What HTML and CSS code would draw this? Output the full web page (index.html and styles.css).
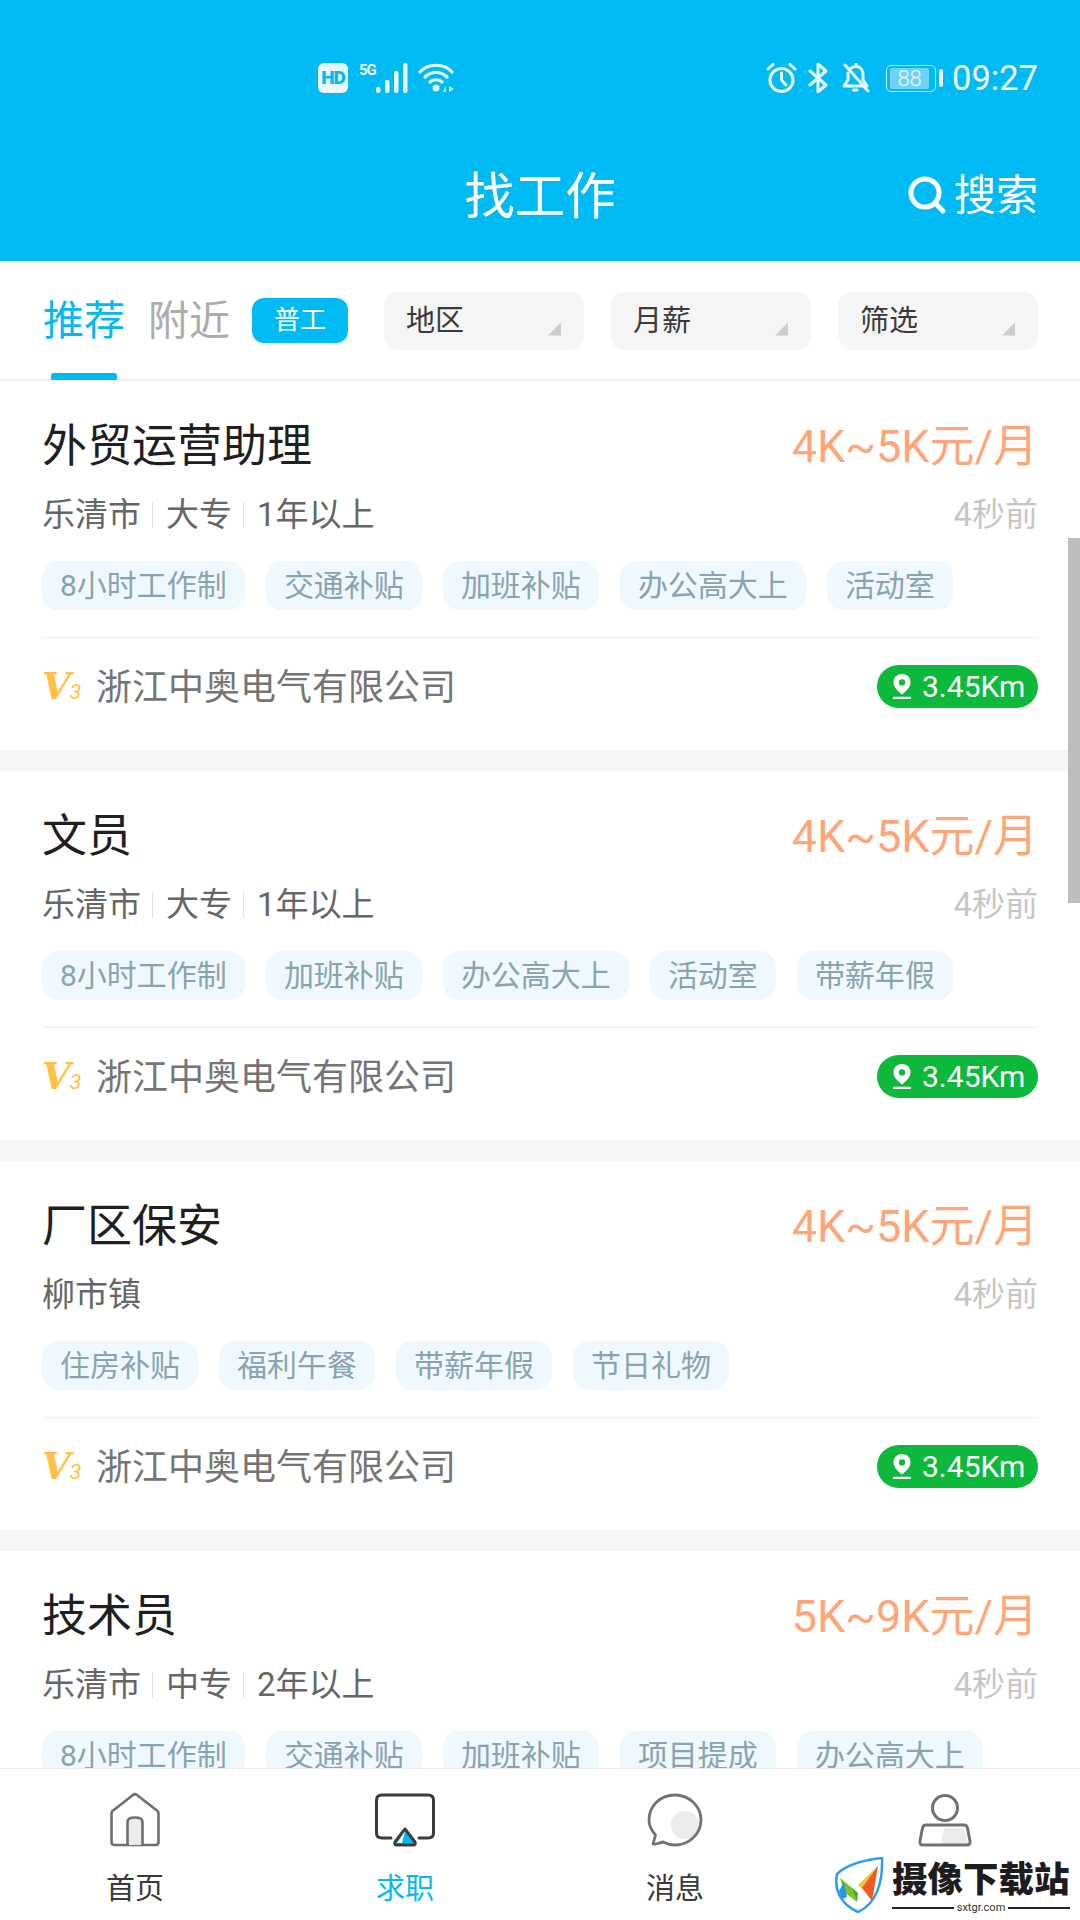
FILE: index.html
```html
<!DOCTYPE html>
<html lang="zh-CN">
<head>
  <meta charset="UTF-8" />
  <meta name="viewport" content="width=device-width, initial-scale=1.0"/>
  <title>找工作</title>
  <link rel="stylesheet" href="styles.css">
</head>
<body>
  <svg class="defs" width="0" height="0">
    <symbol id="pin" viewBox="0 0 24 30">
      <path d="M12 1C6 1 2.500 5.500 2.500 10.500C2.500 16 8 20.500 12 24C16 20.500 21.500 16 21.500 10.500C21.500 5.500 18 1 12 1Z" fill="#fff"/>
      <circle cx="12" cy="10.500" r="3.500" fill="#0db93a"/>
      <rect x="2" y="26.500" width="20" height="2.500" rx="1" fill="#fff"/>
    </symbol>
  </svg>

  <div class="page">
    <header class="header">
      <div class="status">
        <div class="status-group">
          <span class="hd">HD</span>
          <span class="net">5G</span>
          <svg class="ic-bars" width="32" height="30" viewBox="0 0 32 30">
            <g fill="#e8f8fe">
              <rect x="0" y="24" width="4.500" height="6" rx="2"/>
              <rect x="9" y="17" width="4.500" height="13" rx="2"/>
              <rect x="18" y="8" width="4.500" height="22" rx="2"/>
              <rect x="27" y="0" width="4.500" height="30" rx="2"/>
            </g>
          </svg>
          <svg class="ic-wifi" width="38" height="30" viewBox="0 0 38 30">
            <g fill="none" stroke="#e8f8fe" stroke-width="3.200" stroke-linecap="round">
              <path d="M2 9C10 0 26 0 34 9"/>
              <path d="M7 14C13 8 23 8 29 14"/>
              <path d="M12 19C15 16 21 16 24 19"/>
            </g>
            <circle cx="18" cy="25" r="3.500" fill="#e8f8fe"/>
            <path d="M28 29V23L25 29ZM31 23V29L36 26Z" fill="#e8f8fe"/>
          </svg>
        </div>
        <div class="status-group status-right">
          <svg width="31" height="30" viewBox="0 0 31 30" fill="none" stroke="#e8f8fe" stroke-width="3" stroke-linecap="round">
            <circle cx="15.500" cy="17" r="11.500"/>
            <path d="M15.500 10V17L20 22"/>
            <path d="M2 6L7 1.500M29 6L24 1.500"/>
          </svg>
          <svg width="20" height="30" viewBox="0 0 20 30" fill="none" stroke="#e8f8fe" stroke-width="3" stroke-linejoin="round" stroke-linecap="round">
            <path d="M2 8L18 22L10 29V1L18 8L2 22"/>
          </svg>
          <svg width="28" height="30" viewBox="0 0 28 30" fill="none" stroke="#e8f8fe" stroke-width="3" stroke-linecap="round" stroke-linejoin="round">
            <path d="M8 6C10 4 12 3.500 14 3.500C19 3.500 21 8 21 12V17L25 23H7"/>
            <path d="M6 10V17L2 23H7"/>
            <path d="M3 2L26 28"/>
            <path d="M11.500 27H15" />
            <path d="M14 1V3"/>
          </svg>
          <div class="battery"><span class="battery-level">88</span></div>
          <span class="battery-tip"></span>
          <span class="clock">09:27</span>
        </div>
      </div>
      <div class="title-row">
        <span></span>
        <h1 class="title">找工作</h1>
        <div class="search">
          <svg width="38" height="38" viewBox="0 0 38 38" fill="none" stroke="#fff" stroke-width="5" stroke-linecap="round">
            <circle cx="17" cy="17" r="14"/>
            <path d="M27 27L35 35"/>
          </svg>
          <span class="search-text">搜索</span>
        </div>
      </div>
    </header>

    <nav class="tabs">
      <span class="tab tab-active">推荐</span>
      <span class="tab">附近</span>
      <span class="badge">普工</span>
      <div class="filters">
        <div class="filter">地区</div>
        <div class="filter">月薪</div>
        <div class="filter">筛选</div>
      </div>
    </nav>

    <main class="list">
      <article class="card">
        <div class="row">
          <h2 class="job">外贸运营助理</h2>
          <span class="pay">4K~5K元/月</span>
        </div>
        <div class="row row-meta">
          <div class="meta"><span>乐清市</span><span>大专</span><span>1年以上</span></div>
          <span class="time">4秒前</span>
        </div>
        <div class="tags">
          <span class="tag">8小时工作制</span>
          <span class="tag">交通补贴</span>
          <span class="tag">加班补贴</span>
          <span class="tag">办公高大上</span>
          <span class="tag">活动室</span>
        </div>
        <div class="company">
          <span class="level">V<small>3</small></span>
          <span class="company-name">浙江中奥电气有限公司</span>
          <span class="dist"><svg width="22" height="27"><use href="#pin"/></svg>3.45Km</span>
        </div>
      </article>

      <article class="card">
        <div class="row">
          <h2 class="job">文员</h2>
          <span class="pay">4K~5K元/月</span>
        </div>
        <div class="row row-meta">
          <div class="meta"><span>乐清市</span><span>大专</span><span>1年以上</span></div>
          <span class="time">4秒前</span>
        </div>
        <div class="tags">
          <span class="tag">8小时工作制</span>
          <span class="tag">加班补贴</span>
          <span class="tag">办公高大上</span>
          <span class="tag">活动室</span>
          <span class="tag">带薪年假</span>
        </div>
        <div class="company">
          <span class="level">V<small>3</small></span>
          <span class="company-name">浙江中奥电气有限公司</span>
          <span class="dist"><svg width="22" height="27"><use href="#pin"/></svg>3.45Km</span>
        </div>
      </article>

      <article class="card">
        <div class="row">
          <h2 class="job">厂区保安</h2>
          <span class="pay">4K~5K元/月</span>
        </div>
        <div class="row row-meta">
          <div class="meta"><span>柳市镇</span></div>
          <span class="time">4秒前</span>
        </div>
        <div class="tags">
          <span class="tag">住房补贴</span>
          <span class="tag">福利午餐</span>
          <span class="tag">带薪年假</span>
          <span class="tag">节日礼物</span>
        </div>
        <div class="company">
          <span class="level">V<small>3</small></span>
          <span class="company-name">浙江中奥电气有限公司</span>
          <span class="dist"><svg width="22" height="27"><use href="#pin"/></svg>3.45Km</span>
        </div>
      </article>

      <article class="card">
        <div class="row">
          <h2 class="job">技术员</h2>
          <span class="pay">5K~9K元/月</span>
        </div>
        <div class="row row-meta">
          <div class="meta"><span>乐清市</span><span>中专</span><span>2年以上</span></div>
          <span class="time">4秒前</span>
        </div>
        <div class="tags">
          <span class="tag">8小时工作制</span>
          <span class="tag">交通补贴</span>
          <span class="tag">加班补贴</span>
          <span class="tag">项目提成</span>
          <span class="tag">办公高大上</span>
        </div>
      </article>

      <div class="scrollbar"></div>
    </main>

    <footer class="bottom">
      <div class="bottom-item">
        <svg width="60" height="56" viewBox="0 0 60 56">
          <path d="M7.500 19L28 3C29.200 2 30.800 2 32 3L52.500 19C53.200 19.700 53.500 20.500 53.500 21.500V50C53.500 52 52.500 53 50.500 53H9.500C7.500 53 6.500 52 6.500 50V21.500C6.500 20.500 6.800 19.700 7.500 19Z" fill="none" stroke="#6f6f6f" stroke-width="2.600" stroke-linejoin="round"/>
          <path d="M24 53V30C24 27.500 26 26.500 30 26.500C34 26.500 37 27.500 37 30V53Z" fill="#ececec"/>
          <path d="M22.500 53V30C22.500 27 25 25.500 30 25.500C35 25.500 37.500 27 37.500 30V53" fill="none" stroke="#6f6f6f" stroke-width="2.600"/>
        </svg>
        <span>首页</span>
      </div>
      <div class="bottom-item bottom-item-active">
        <svg width="60" height="56" viewBox="0 0 60 56">
          <path d="M16 46H7C3.500 46 1.500 44 1.500 41V8C1.500 5 3.500 3 7 3H53C56.500 3 58.500 5 58.500 8V41C58.500 44 56.500 46 53 46H44" fill="none" stroke="#3c3c3c" stroke-width="3" stroke-linecap="round"/>
          <path d="M30 37L40 50C41 52 40 53 38 53H22C20 53 19 52 20 50Z" fill="#00baf4" stroke="#3c3c3c" stroke-width="3" stroke-linejoin="round"/>
          <path d="M30 39L22 51H27Z" fill="#fff"/>
        </svg>
        <span>求职</span>
      </div>
      <div class="bottom-item">
        <svg width="60" height="56" viewBox="0 0 60 56">
          <circle cx="40" cy="33" r="14" fill="#ebebeb"/>
          <path d="M8 52L10.500 43C6 38 4 33 4 28C4 14 15 3 30 3C44 3 56 14 56 28C56 42 44 53 30 53C25 53 21 51.500 18 50C14 50.500 11 53 8 52Z" fill="none" stroke="#727272" stroke-width="2.800" stroke-linejoin="round"/>
        </svg>
        <span>消息</span>
      </div>
      <div class="bottom-item">
        <svg width="60" height="56" viewBox="0 0 60 56">
          <path d="M29 36H49L53 52H26Z" fill="#ebebeb"/>
          <circle cx="30" cy="16" r="12.500" fill="none" stroke="#727272" stroke-width="3"/>
          <path d="M11 33H49C51 33 52 34 52.500 36L55 49C55.500 52 54 53 52 53H8C6 53 4.500 52 5 49L7.500 36C8 34 9 33 11 33Z" fill="none" stroke="#727272" stroke-width="3"/>
        </svg>
      </div>
    </footer>

    <div class="mark">
      <svg width="50" height="56" viewBox="0 0 50 56">
        <path d="M48 1C30 3 12 8 3 17C0 32 6 47 24 55C42 47 49 26 48 1Z" fill="#fff" stroke="#2a9df4" stroke-width="2.500"/>
        <path d="M6 21L17 30L23 45L10 35Z" fill="#7cc520"/>
        <path d="M5 34L10 25L13 40L8 42Z" fill="#1e9be0"/>
        <path d="M17 30L24 36L23 45Z" fill="#3fae2a"/>
        <path d="M44 9L24 28L36 38Z" fill="#f4c430"/>
        <path d="M44 9L38 44L28 31Z" fill="#ef5a24"/>
      </svg>
      <div class="mark-text">
        <strong>摄像下载站</strong>
        <span class="mark-url">sxtgr.com</span>
      </div>
    </div>
  </div>
</body>
</html>
```

FILE: styles.css
```css
* {
  box-sizing: border-box;
  font-family: Roboto, 'Noto Sans CJK SC', sans-serif;
}
body {
  margin: 0;
  background: #fff;
}
h1, h2 {
  margin: 0;
  font-weight: 400;
}
.defs {
  position: absolute;
}
.page {
  position: relative;
  width: 1080px;
  height: 1920px;
  display: flex;
  flex-direction: column;
  overflow: hidden;
}

/* header */
.header {
  height: 261px;
  flex: none;
  background: #00baf4;
  color: #fff;
  padding: 58px 42px 0 318px;
}
.status {
  height: 40px;
  display: flex;
  justify-content: space-between;
  align-items: center;
}
.status-group {
  display: flex;
  align-items: center;
}
.hd {
  width: 30px;
  height: 30px;
  border-radius: 6px;
  background: #e8f8fe;
  color: #00baf4;
  font-size: 19px;
  font-weight: 900;
  line-height: 30px;
  text-align: center;
  letter-spacing: -1px;
}
.net {
  width: 17px;
  height: 30px;
  margin-left: 11px;
  font-size: 15px;
  font-weight: 700;
  line-height: 14px;
  letter-spacing: -1px;
  color: #e8f8fe;
}
.ic-wifi {
  margin-left: 10px;
}
.status-right svg {
  margin-right: 11px;
}
.status-right svg:nth-child(3) {
  margin-right: 16px;
  margin-left: 3px;
}
.battery {
  width: 50px;
  height: 27px;
  border: 1.500px solid #c5eefc;
  border-radius: 5px;
  padding: 2px 6px 2px 3px;
}
.battery-level {
  display: block;
  height: 100%;
  background: #6fd3f8;
  border-radius: 2px;
  color: #e8f8fe;
  font-size: 22px;
  font-weight: 300;
  line-height: 21px;
  text-align: center;
}
.battery-tip {
  width: 4px;
  height: 18px;
  margin: 0 9px 0 3px;
  border-radius: 2px;
  background: #e8f8fe;
}
.clock {
  font-size: 34.500px;
  font-weight: 400;
  color: #f2fbff;
}
.title-row {
  margin: 63px 0 0 -276px;
  height: 60px;
  display: grid;
  grid-template-columns: 1fr auto 1fr;
  align-items: center;
}
.title {
  font-size: 50.500px;
  line-height: 60px;
}
.search {
  justify-self: end;
  display: flex;
  align-items: center;
  gap: 8px;
  margin-bottom: 4px;
  font-size: 42px;
}
.search-text {
  margin-bottom: 6px;
}

/* tabs + filters */
.tabs {
  height: 119px;
  flex: none;
  display: flex;
  align-items: center;
  padding: 0 42px 0 43px;
  border-bottom: 1px solid #eeeeee;
}
.tab {
  position: relative;
  font-size: 41px;
  line-height: 50px;
  padding-top: 2px;
  color: #acacac;
  margin-right: 23px;
}
.tab-active {
  color: #00baf4;
}
.tab-active::after {
  content: "";
  position: absolute;
  left: 8px;
  top: 79px;
  width: 66px;
  height: 8px;
  border-radius: 3px;
  background: #00baf4;
}
.badge {
  width: 96px;
  height: 45px;
  margin-left: -1px;
  border-radius: 12px;
  background: #00baf4;
  color: #fff;
  font-size: 26px;
  line-height: 44px;
  text-align: center;
}
.filters {
  margin-left: auto;
  margin-top: 1px;
  display: flex;
  gap: 27px;
}
.filter {
  position: relative;
  width: 200px;
  height: 58px;
  padding-left: 22px;
  border-radius: 14px;
  background: #f5f5f5;
  color: #3a3a3a;
  font-size: 29px;
  line-height: 58px;
}
.filter::after {
  content: "";
  position: absolute;
  right: 23px;
  bottom: 14px;
  width: 13px;
  height: 13px;
  background: #cccccc;
  clip-path: polygon(100% 0, 100% 100%, 0 100%);
}

/* job list */
.list {
  position: relative;
  flex: 1;
  overflow: hidden;
  padding-top: 1px;
  background: #f5f5f5;
}
.card {
  height: 369px;
  margin-bottom: 21px;
  padding: 40px 42px 0 42px;
  background: #fff;
}
.row {
  display: flex;
  justify-content: space-between;
  align-items: center;
  height: 50px;
}
.row-meta {
  height: 40px;
  margin-top: 24px;
}
.job {
  font-size: 45px;
  line-height: 50px;
  padding-top: 2px;
  color: #1f1f1f;
}
.pay {
  font-size: 45px;
  color: #ffa678;
  margin-bottom: 8px;
}
.meta {
  display: flex;
  align-items: center;
  font-size: 33px;
  color: #666;
}
.meta span {
  line-height: 26px;
}
.meta span + span {
  margin-left: 11px;
  padding-left: 13px;
  border-left: 1px solid #e2e2e2;
}
.time {
  margin-bottom: 7px;
  font-size: 33px;
  color: #c6c6c6;
}
.tags {
  display: flex;
  gap: 21px;
  margin-top: 26px;
}
.tag {
  height: 49px;
  padding: 0 18px;
  border-radius: 16px;
  background: #eff8fd;
  color: #8aa3b0;
  font-size: 30px;
  line-height: 50px;
}
.company {
  display: flex;
  align-items: center;
  height: 96px;
  margin-top: 27px;
  padding-top: 2px;
  border-top: 1px solid #eeeeee;
}
.level {
  width: 54px;
  margin-top: 4px;
  font-family: 'DejaVu Serif', serif;
  font-size: 37px;
  font-weight: 700;
  font-style: italic;
  color: #ffc043;
  line-height: 40px;
  letter-spacing: -3px;
}
.level small {
  font-family: Roboto, sans-serif;
  font-size: 21px;
  font-weight: 400;
  margin-left: 2px;
}
.company-name {
  margin-bottom: 6px;
  font-size: 36px;
  color: #757575;
}
.dist {
  margin-left: auto;
  display: flex;
  align-items: center;
  gap: 9px;
  height: 43px;
  padding-left: 14px;
  width: 161px;
  border-radius: 22px;
  background: #0db93a;
  color: #fff;
  font-size: 30px;
  white-space: nowrap;
}
.scrollbar {
  position: absolute;
  right: 0;
  top: 158px;
  width: 12px;
  height: 365px;
  background: #bdbdbd;
}

/* bottom bar */
.bottom {
  height: 152px;
  flex: none;
  display: grid;
  grid-template-columns: repeat(4, 1fr);
  border-top: 1px solid #eeeeee;
  background: #fff;
}
.bottom-item {
  display: flex;
  flex-direction: column;
  align-items: center;
  padding-top: 23px;
  color: #3a3a3a;
  font-size: 29px;
  line-height: 40px;
}
.bottom-item span {
  margin-top: 21px;
}
.bottom-item-active span {
  color: #00baf4;
}

/* watermark */
.mark {
  position: absolute;
  left: 834px;
  top: 1857px;
  width: 246px;
  height: 63px;
  display: flex;
  gap: 8px;
}
.mark-text {
  display: flex;
  flex-direction: column;
  width: 178px;
}
.mark-text strong {
  font-size: 35.500px;
  font-weight: 900;
  line-height: 42px;
  padding-top: 2px;
  color: #1d1d1d;
  white-space: nowrap;
}
.mark-url {
  display: flex;
  align-items: center;
  gap: 3px;
  font-size: 11px;
  line-height: 14px;
  color: #333;
}
.mark-url::before, .mark-url::after {
  content: "";
  flex: 1;
  height: 2px;
  background: #222;
}
```
